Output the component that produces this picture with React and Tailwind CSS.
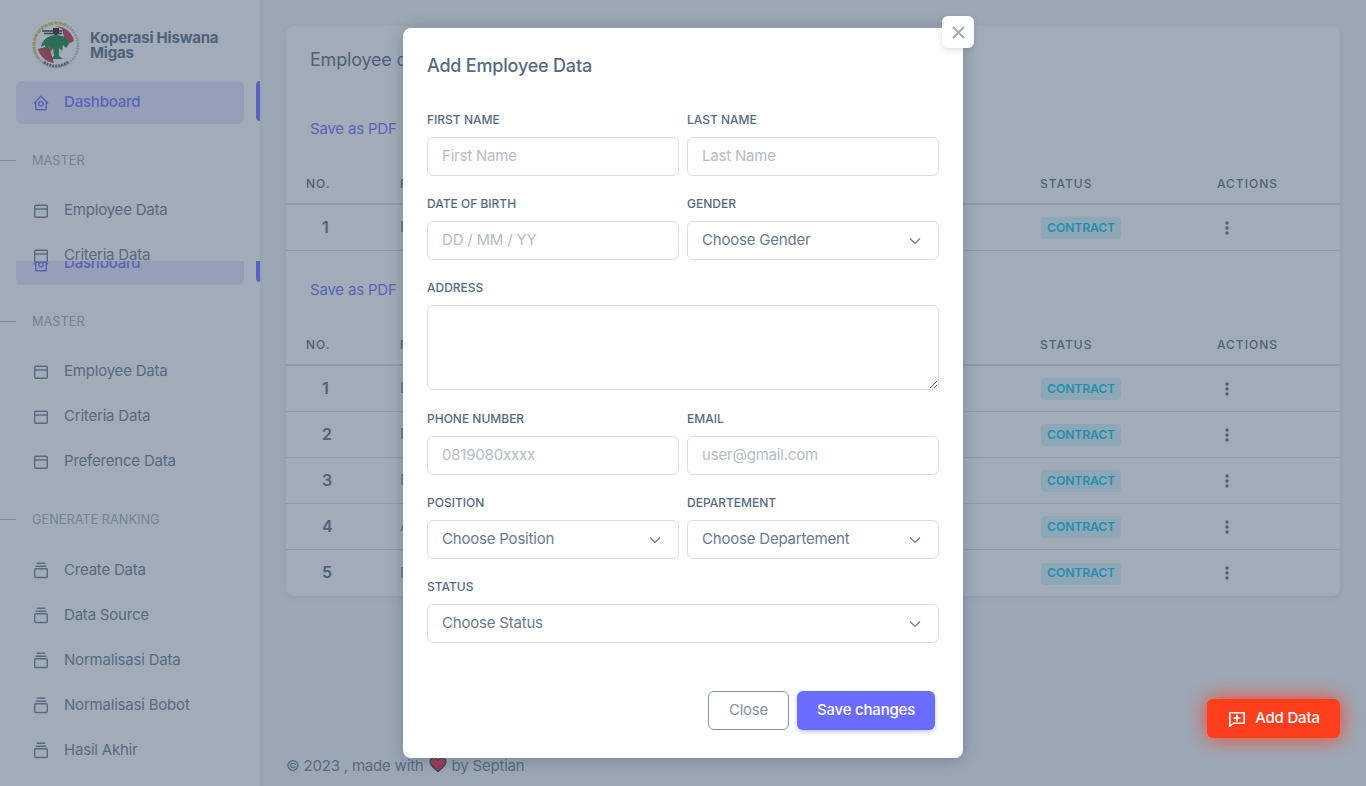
import { BiHomeCircle, BiDotsVerticalRounded } from 'react-icons/bi';

const Logo = () => (
    <svg width="48" height="48" viewBox="0 0 48 48" className="shrink-0">
        <circle cx="24" cy="24" r="22" fill="none" stroke="#c4c4c4" strokeWidth="2.5" strokeDasharray="2 0.8" />
        <path d="M6 37 A22 22 0 0 1 18 3" fill="none" stroke="#e3c93a" strokeWidth="3" strokeDasharray="3 1.5" />
        <path d="M18 3 A22 22 0 0 1 34 4" fill="none" stroke="#e3c93a" strokeWidth="2.5" strokeDasharray="3 1.5" />
        <circle cx="24" cy="24" r="18.5" fill="#fff" />
        <path d="M24 5.5 A18.5 18.5 0 0 1 42 20 L34 24 L30 8 Z" fill="#c8303a" />
        <path d="M6 28 L17 25 L22 42 A18.5 18.5 0 0 1 6 28 Z" fill="#c8303a" />
        <path d="M10 10 L30 10 M12 12.5 h18" stroke="#333" strokeWidth="1.4" />
        <path d="M21 7 h6 v5 l-3 3 l-3 -3 Z" fill="#222" />
        <path d="M24 14 C16 14 10 19 9 26 L13 24 L14 31 L17 25 L19 31 L21 27 L22 35 L18 38 L31 38 L27 35 L27 27 L30 30 L31 24 L34 27 L37 23 C37 18 31 14 24 14 Z" fill="#16803c" />
        <path d="M12 41 A20 20 0 0 0 36 41" fill="none" stroke="#666" strokeWidth="3" strokeDasharray="2 1" />
    </svg>
);

const Chevron = () => (
    <svg width="14" height="14" viewBox="0 0 14 14" className="absolute right-[17px] top-[13px] pointer-events-none">
        <path d="M2 4.5 7 9.5 12 4.5" fill="none" stroke="#697a8d" strokeWidth="1.2" />
    </svg>
);

const Heart = () => (
    <svg width="18" height="17" viewBox="0 0 18 17" className="inline-block mx-px align-[-2px]">
        <path d="M9 15.5 C3 11 1 8.5 1 5.5 C1 3 3 1.5 5 1.5 C6.8 1.5 8.2 2.5 9 4 C9.8 2.5 11.2 1.5 13 1.5 C15 1.5 17 3 17 5.5 C17 8.5 15 11 9 15.5 Z" fill="#f01a2c" stroke="#222" strokeWidth="1.2" />
    </svg>
);

const WindowIcon = ({ className }) => (
    <svg viewBox="0 0 20 20" className={className} fill="none" stroke="currentColor" strokeWidth="1.4">
        <rect x="2.7" y="5.2" width="12.6" height="12" rx="1.2" />
        <path d="M2.7 9h12.6" />
    </svg>
);

const StackIcon = ({ className }) => (
    <svg viewBox="0 0 20 20" className={className} fill="none" stroke="currentColor" strokeWidth="1.4">
        <path d="M4.7 3.2h8.6M3.7 6.3h10.6" />
        <rect x="2.7" y="8.7" width="12.6" height="8.8" rx="1.2" />
    </svg>
);

const AddMessageIcon = ({ className }) => (
    <svg viewBox="0 0 20 20" className={className} fill="none" stroke="currentColor">
        <path d="M2.8 3.8h14.4v10.4H6.8l-4 3z" strokeWidth="1.6" strokeLinejoin="round" />
        <path d="M10 5.8v6.6M6.7 9.1h6.6" strokeWidth="1.8" />
    </svg>
);

const NavItem = ({ icon: Icon, label }) => (
    <div className="mx-4 mt-[5px] h-10 px-4 flex items-center text-[15px] text-[#697a8d]">
        <Icon className="w-5 h-5 mr-3 shrink-0" />
        <span>{label}</span>
    </div>
);

const ActiveItem = () => (
    <div className="relative mx-4 h-[43px] px-4 flex items-center rounded-md bg-[#696cff]/16 text-[15px] font-medium text-[#696cff]">
        <BiHomeCircle className="w-[18px] h-[18px] mr-[14px] shrink-0" />
        <span>Dashboard</span>
        <div className="absolute right-[-16px] top-0 w-1 h-10 rounded-l bg-[#696cff]"></div>
    </div>
);

const SectionHead = ({ label, className }) => (
    <div className={`relative h-6 pl-8 flex items-center text-[12.75px] tracking-normal uppercase text-[#a1acb8] ${className}`}>
        <div className="absolute left-0 top-1/2 w-4 h-px bg-[#b4bdc6]"></div>
        <span className="pt-[2px]">{label}</span>
    </div>
);

const TableHead = () => (
    <div className="h-[43px] px-5 pt-[3px] flex items-center border-b-2 border-[#d9dee3] text-[12px] font-medium tracking-[1px] uppercase text-[#566a7f]">
        <div className="w-[94px]">No.</div>
        <div className="w-[640px]">F</div>
        <div className="w-[177px]">Status</div>
        <div>Actions</div>
    </div>
);

const TableRow = ({ no, letter, last }) => (
    <div className={`h-[46px] px-5 flex items-center text-[#697a8d] text-[15px] ${last ? '' : 'border-b border-[#d9dee3]'}`}>
        <div className="w-[94px] pl-4 pb-[2px] text-[16px] font-semibold text-[#566a7f]">{no}</div>
        <div className="w-[640px]">{letter}</div>
        <div className="w-[177px]">
            <span className="ml-px inline-flex items-center justify-center w-20 h-[22px] rounded bg-[#d7f5fc] text-[#03c3ec] text-[12.25px] font-semibold uppercase">Contract</span>
        </div>
        <BiDotsVerticalRounded className="w-5 h-5 text-[#566a7f]" />
    </div>
);

const Field = ({ label, children, className = '' }) => (
    <div className={className}>
        <label className="block h-[19px] pt-px mb-2 text-[12px] leading-[18px] font-medium tracking-normal uppercase text-[#566a7f]">{label}</label>
        {children}
    </div>
);

const inputCls = 'w-full h-[39px] px-[14px] rounded-md border border-[#d9dee3] bg-white text-[15px] text-[#697a8d] placeholder:text-[#b4bdc6] outline-none';

const Input = ({ placeholder }) => <input type="text" placeholder={placeholder} className={`${inputCls} pb-[2px]`} />;

const Select = ({ placeholder }) => (
    <div className="relative">
        <select className={`${inputCls} appearance-none`} defaultValue="">
            <option value="">{placeholder}</option>
        </select>
        <Chevron />
    </div>
);

const App = () => {
    return (
        <div className="relative flex h-screen overflow-hidden bg-[#f5f5f9] tracking-[-0.2px] font-[family-name:Inter,sans-serif]">
            <aside className="w-[260px] shrink-0 flex flex-col bg-white shadow-[0_2px_6px_rgba(67,89,113,0.12)]">
                <div className="h-[81px] shrink-0 pl-8 pt-2 flex items-center gap-[10px]">
                    <Logo />
                    <div className="text-[15px] leading-[15px] font-bold text-[#566a7f] w-[140px]">Koperasi Hiswana Migas</div>
                </div>
                <div className="h-[180px] shrink-0">
                    <ActiveItem />
                    <SectionHead label="Master" className="mt-6 mb-[18px]" />
                    <NavItem icon={WindowIcon} label="Employee Data" />
                    <NavItem icon={WindowIcon} label="Criteria Data" />
                </div>
                <div className="flex-1 overflow-hidden">
                    <div className="-mt-[19px]">
                        <ActiveItem />
                        <SectionHead label="Master" className="mt-6 mb-[18px]" />
                        <NavItem icon={WindowIcon} label="Employee Data" />
                        <NavItem icon={WindowIcon} label="Criteria Data" />
                        <NavItem icon={WindowIcon} label="Preference Data" />
                        <SectionHead label="Generate Ranking" className="mt-[26px] mb-[19px]" />
                        <NavItem icon={StackIcon} label="Create Data" />
                        <NavItem icon={StackIcon} label="Data Source" />
                        <NavItem icon={StackIcon} label="Normalisasi Data" />
                        <NavItem icon={StackIcon} label="Normalisasi Bobot" />
                        <NavItem icon={StackIcon} label="Hasil Akhir" />
                    </div>
                </div>
            </aside>

            <main className="flex-1 flex flex-col px-[26px] pt-[26px]">
                <div className="rounded-lg bg-white shadow-[0_2px_6px_rgba(67,89,113,0.12)]">
                    <div className="h-[67px] px-6 flex items-center text-[18px] text-[#566a7f]">Employee data</div>
                    <div className="h-[69px] px-6 pt-[3px] flex items-center text-[15px] text-[#696cff]">Save as PDF</div>
                    <TableHead />
                    <TableRow no="1" letter="E" />
                    <div className="h-[72px] px-6 pt-[6px] flex items-center text-[15px] text-[#696cff]">Save as PDF</div>
                    <TableHead />
                    <TableRow no="1" letter="E" />
                    <TableRow no="2" letter="F" />
                    <TableRow no="3" letter="F" />
                    <TableRow no="4" letter="A" />
                    <TableRow no="5" letter="N" last />
                </div>
                <footer className="mt-auto h-10 flex items-center text-[15px] text-[#697a8d]">
                    <span>© 2023 , made with <Heart /> by Septian</span>
                </footer>
            </main>

            <div className="absolute inset-0 bg-[#435971]/50"></div>

            <button className="absolute right-[26px] bottom-[48px] w-[133px] h-[39px] flex items-center justify-center gap-2 rounded-md bg-[#ff3e1d] text-[15px] font-medium text-white shadow-[0_0_20px_#ff3e1d]">
                <AddMessageIcon className="w-5 h-5" />
                Add Data
            </button>

            <div className="absolute left-[403px] top-7 w-[560px] h-[730px] px-6 pt-[24px] rounded-lg bg-white shadow-[0_2px_16px_rgba(67,89,113,0.45)]">
                <button className="absolute -top-3 right-[-11px] w-8 h-8 flex items-center justify-center rounded-md bg-white text-[#a1acb8] shadow-[0_2px_6px_rgba(67,89,113,0.2)]">
                    <svg width="15" height="15" viewBox="0 0 15 15" fill="none" stroke="currentColor" strokeWidth="2.2">
                        <path d="M2 2l11 11M13 2 2 13" />
                    </svg>
                </button>
                <h5 className="h-[27px] text-[18px] leading-[27px] font-medium text-[#566a7f]">Add Employee Data</h5>
                <div className="mt-[31px] grid grid-cols-2 gap-x-2">
                    <Field label="First Name" className="mb-[18px]"><Input placeholder="First Name" /></Field>
                    <Field label="Last Name" className="mb-[18px]"><Input placeholder="Last Name" /></Field>
                    <Field label="Date of Birth" className="mb-[18px]"><Input placeholder="DD / MM / YY" /></Field>
                    <Field label="Gender" className="mb-[18px]"><Select placeholder="Choose Gender" /></Field>
                    <Field label="Address" className="col-span-2 mb-[19px]">
                        <textarea className="block w-full h-[85px] px-[14px] py-2 rounded-md border border-[#d9dee3] outline-none"></textarea>
                    </Field>
                    <Field label="Phone Number" className="mb-[18px]"><Input placeholder="0819080xxxx" /></Field>
                    <Field label="Email" className="mb-[18px]"><Input placeholder="user@gmail.com" /></Field>
                    <Field label="Position" className="mb-[18px]"><Select placeholder="Choose Position" /></Field>
                    <Field label="Departement" className="mb-[18px]"><Select placeholder="Choose Departement" /></Field>
                    <Field label="Status" className="col-span-2"><Select placeholder="Choose Status" /></Field>
                </div>
                <div className="mt-12 pr-1 flex justify-end gap-2">
                    <button className="w-[81px] h-[39px] rounded-md border border-[#8592a3] text-[15px] text-[#8592a3]">Close</button>
                    <button className="w-[138px] h-[39px] rounded-md bg-[#696cff] text-[15px] font-medium text-white shadow-[0_2px_4px_rgba(105,108,255,0.4)]">Save changes</button>
                </div>
            </div>
        </div>
    );
};

export default App;
